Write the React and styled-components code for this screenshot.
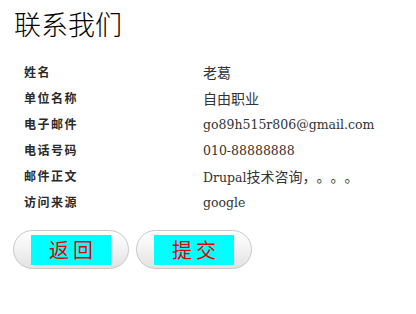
import React from "react";
import styled, { createGlobalStyle } from "styled-components";

const Global = createGlobalStyle`
  html, body { margin: 0; padding: 0; background: #fff; }
  body { font-family: "DejaVu Serif", "Noto Sans CJK SC", serif; color: #333; }
`;

const Page = styled.div`
  padding: 7px 14px;
`;

const Title = styled.h1`
  margin: 0 0 17px 0;
  font-family: "Noto Sans CJK SC", sans-serif;
  font-weight: 300;
  font-size: 27px;
  line-height: 34px;
  color: #000;
`;

const Table = styled.div`
  display: grid;
  grid-template-columns: 179px 1fr;
  grid-auto-rows: 26px;
  padding-left: 10px;
  align-items: center;
`;

const Label = styled.div`
  font-family: "Noto Sans CJK SC", sans-serif;
  font-weight: 700;
  font-size: 12px;
  letter-spacing: 1.5px;
  color: #2a2a2a;
`;

const Value = styled.div`
  font-size: 14px;
  color: #333;
  padding-top: 2px;
  white-space: nowrap;
`;

const Latin = styled.span`
  font-family: "DejaVu Serif", serif;
  font-size: 12.5px;
`;

const Cjk = styled.span`
  font-family: "Noto Sans CJK SC", sans-serif;
  font-size: 14px;
  text-spacing-trim: space-all;
  font-feature-settings: "fwid" 1;
`;

const Buttons = styled.div`
  display: flex;
  gap: 7px;
  margin-top: 16px;
  margin-left: -1px;
`;

const Pill = styled.button`
  display: flex;
  align-items: center;
  justify-content: center;
  width: 116px;
  height: 39px;
  padding: 0;
  border: 1px solid #c8c8c8;
  border-radius: 20px;
  background: linear-gradient(#ffffff, #f2f2f2 50%, #e2e2e2);
  box-shadow: inset 0 1px 0 #fff;
  cursor: pointer;
`;

const Face = styled.span`
  display: flex;
  align-items: center;
  justify-content: center;
  width: 80px;
  height: 30px;
  background: #00ffff;
  color: #e00000;
  font-family: "Noto Sans CJK SC", serif;
  font-weight: 400;
  font-size: 20px;
  letter-spacing: 4px;
  text-indent: 4px;
`;

const rows = [
  ["姓名", "老葛"],
  ["单位名称", "自由职业"],
  ["电子邮件", "go89h515r806@gmail.com"],
  ["电话号码", "010-88888888"],
  ["邮件正文", "Drupal技术咨询，。。。"],
  ["访问来源", "google"],
];

function Mixed({ text }) {
  const parts = text.match(/[\x00-\x7f]+|[^\x00-\x7f]+/g) || [];
  return parts.map((p, i) =>
    /^[\x00-\x7f]/.test(p) ? <Latin key={i}>{p}</Latin> : <Cjk key={i}>{p}</Cjk>
  );
}

export default function App() {
  return (
    <Page>
      <Global />
      <Title>联系我们</Title>
      <Table>
        {rows.map(([k, v]) => (
          <React.Fragment key={k}>
            <Label>{k}</Label>
            <Value><Mixed text={v} /></Value>
          </React.Fragment>
        ))}
      </Table>
      <Buttons>
        <Pill><Face>返回</Face></Pill>
        <Pill><Face>提交</Face></Pill>
      </Buttons>
    </Page>
  );
}
